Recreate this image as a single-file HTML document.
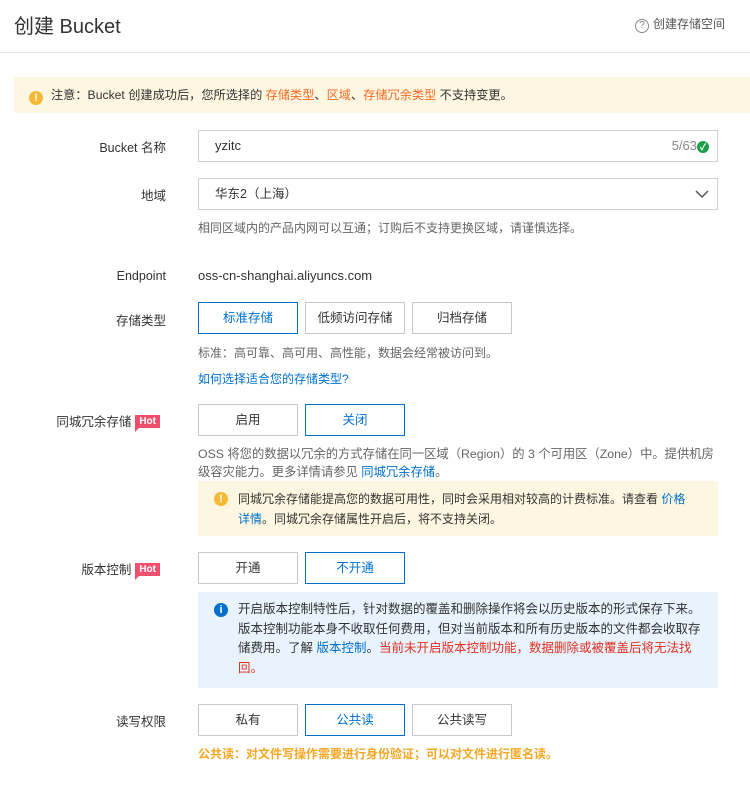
<!DOCTYPE html><html><head><meta charset="utf-8"><style>
*{box-sizing:border-box;margin:0;padding:0}
body{width:750px;height:785px;background:#fff;font-family:"Liberation Sans","Noto Sans CJK SC",sans-serif;color:#333;font-size:13px;position:relative;overflow:hidden}
.a{position:absolute}
.lbl{position:absolute;right:584px;font-size:12.5px;color:#333;white-space:nowrap}
.btn{position:absolute;height:32px;width:100px;border:1px solid #c8c8c8;text-align:center;line-height:30px;font-size:12.5px;color:#333;background:#fff}
.btn.on{border-color:#0070cc;color:#0070cc}
.help{position:absolute;left:198px;font-size:12px;color:#666;white-space:nowrap}
.hot{display:inline-block;background:#f0506e;color:#fff;font-size:10px;font-weight:bold;padding:0 4px;height:13px;line-height:13px;position:relative;vertical-align:2px;margin-left:4px}
.hot:after{content:"";position:absolute;left:0;bottom:-4px;border-left:4px solid #f0506e;border-bottom:4px solid transparent}
.blue{color:#0070cc}.org{color:#f56b24}.red{color:#e0301e}
.ic{display:inline-block;width:14px;height:14px;border-radius:50%;color:#fff;font-size:11px;font-weight:bold;text-align:center;line-height:14px}
</style></head><body>
<div class="a" style="left:14px;top:10px;font-size:20px;color:#333">创建 Bucket</div>
<div class="a" style="left:635px;top:15px;font-size:12px;color:#555"><span style="display:inline-block;width:14px;height:14px;border:1px solid #888;border-radius:50%;font-size:10px;text-align:center;line-height:12px;color:#777;margin-right:4px">?</span>创建存储空间</div>
<div class="a" style="left:0;top:52px;width:750px;height:1px;background:#e6e6e6"></div>
<div class="a" style="left:14px;top:77px;width:736px;height:36px;background:#fdf6e0;line-height:36px;padding-left:15px;font-size:12.2px;color:#333"><span class="ic" style="background:#f5b936;margin-right:8px;vertical-align:-2px">!</span>注意：Bucket 创建成功后，您所选择的 <span class="org">存储类型</span>、<span class="org">区域</span>、<span class="org">存储冗余类型</span> 不支持变更。</div>

<div class="lbl" style="top:137px">Bucket 名称</div>
<div class="a" style="left:198px;top:130px;width:520px;height:32px;border:1px solid #d0d0d0;line-height:30px;padding-left:16px;font-size:13px">yzitc<span style="position:absolute;right:8px;color:#888">5/63<span class="ic" style="background:#1e9e4a;font-size:9px;width:12px;height:12px;line-height:12px">✓</span></span></div>

<div class="lbl" style="top:185px">地域</div>
<div class="a" style="left:198px;top:178px;width:520px;height:32px;border:1px solid #d0d0d0;line-height:30px;padding-left:16px;font-size:12.5px">华东2（上海）<svg style="position:absolute;right:8px;top:10px" width="14" height="10"><path d="M1 2l6 6 6-6" stroke="#555" stroke-width="1.5" fill="none"/></svg></div>
<div class="help" style="top:219px">相同区域内的产品内网可以互通；订购后不支持更换区域，请谨慎选择。</div>

<div class="lbl" style="top:269px">Endpoint</div>
<div class="a" style="left:198px;top:268px;font-size:13px">oss-cn-shanghai.aliyuncs.com</div>

<div class="lbl" style="top:310px">存储类型</div>
<div class="btn on" style="left:198px;top:302px">标准存储</div>
<div class="btn" style="left:305px;top:302px">低频访问存储</div>
<div class="btn" style="left:412px;top:302px">归档存储</div>
<div class="help" style="top:344px">标准：高可靠、高可用、高性能，数据会经常被访问到。</div>
<div class="help blue" style="top:370px;color:#0070cc">如何选择适合您的存储类型?</div>

<div class="lbl" style="top:411px;right:590px">同城冗余存储<span class="hot">Hot</span></div>
<div class="btn" style="left:198px;top:404px">启用</div>
<div class="btn on" style="left:305px;top:404px">关闭</div>
<div class="help" style="top:445px;line-height:18px;font-size:12.3px">OSS 将您的数据以冗余的方式存储在同一区域（Region）的 3 个可用区（Zone）中。提供机房<br>级容灾能力。更多详情请参见 <span class="blue">同城冗余存储</span>。</div>
<div class="a" style="left:198px;top:481px;width:520px;height:55px;background:#fdf6e0;padding:8px 10px 0 40px;font-size:12px;line-height:20px"><span class="ic" style="background:#f5b936;position:absolute;left:16px;top:11px">!</span>同城冗余存储能提高您的数据可用性，同时会采用相对较高的计费标准。请查看 <span class="blue">价格<br>详情</span>。同城冗余存储属性开启后，将不支持关闭。</div>

<div class="lbl" style="top:559px;right:590px">版本控制<span class="hot">Hot</span></div>
<div class="btn" style="left:198px;top:552px">开通</div>
<div class="btn on" style="left:305px;top:552px">不开通</div>
<div class="a" style="left:198px;top:592px;width:520px;height:96px;background:#e8f3fd;padding:8px 10px 0 40px;font-size:12.5px;line-height:19.5px;white-space:nowrap"><span class="ic" style="background:#0070cc;position:absolute;left:16px;top:11px">i</span>开启版本控制特性后，针对数据的覆盖和删除操作将会以历史版本的形式保存下来。<br>版本控制功能本身不收取任何费用，但对当前版本和所有历史版本的文件都会收取存<br>储费用。了解 <span class="blue">版本控制</span>。<span class="red">当前未开启版本控制功能，数据删除或被覆盖后将无法找<br>回。</span></div>

<div class="lbl" style="top:711px">读写权限</div>
<div class="btn" style="left:198px;top:704px">私有</div>
<div class="btn on" style="left:305px;top:704px">公共读</div>
<div class="btn" style="left:412px;top:704px">公共读写</div>
<div class="help" style="top:745px;color:#f5a623;font-weight:bold">公共读：对文件写操作需要进行身份验证；可以对文件进行匿名读。</div>
</body></html>
